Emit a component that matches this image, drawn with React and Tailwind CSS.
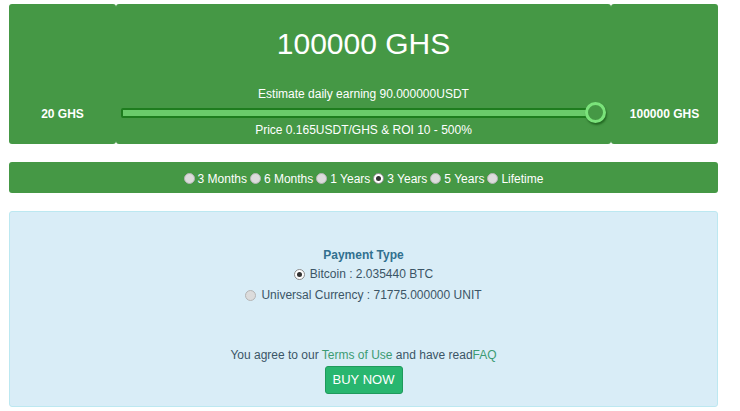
import React, { useState } from 'react';

const periods = ['3 Months', '6 Months', '1 Years', '3 Years', '5 Years', 'Lifetime'];

const Dot = ({ checked }) => (
  <span
    className={
      checked
        ? 'inline-flex h-[11px] w-[11px] items-center justify-center rounded-full border border-[#8a8a8a] bg-white'
        : 'inline-block h-[11px] w-[11px] rounded-full border border-[#b5b5b5] bg-[#dcdcdc]'
    }
  >
    {checked ? <span className="h-[5px] w-[5px] rounded-full bg-[#333]" /> : null}
  </span>
);

const App = () => {
  const [period, setPeriod] = useState('3 Years');
  const [payment, setPayment] = useState('btc');

  return (
    <div className="h-[411px] w-[740px] bg-white px-[9px] pt-[4px] font-['Liberation_Sans',Arial,sans-serif]">
      {/* hashrate selector */}
      <div className="flex h-[140px] w-[709px] text-white">
        <div className="flex w-[107px] items-end justify-center rounded-[3px] bg-[#459845] pb-[21px] text-[12px] font-bold">
          20 GHS
        </div>
        <div className="flex flex-1 flex-col items-center rounded-[3px] bg-[#459845] px-[5px]">
          <div className="mt-[23px] text-[30px] leading-[34px]">100000 GHS</div>
          <div className="mt-[26px] text-[12px] leading-[14px]">Estimate daily earning 90.000000USDT</div>
          <div className="relative mt-[5px] h-[12px] w-full">
            <div className="absolute left-0 right-[6px] top-[2px] h-[10px] rounded-[2px] border-2 border-[#1e7d1e] bg-[#6acb6a]" />
            <div className="absolute right-[0px] top-[-4px] h-[21px] w-[21px] rounded-full border-[3px] border-[#7be37b] bg-[#459845] shadow-[1px_2px_2px_rgba(0,60,0,0.5)]" />
          </div>
          <div className="mt-[5px] text-[12px] leading-[14px]">Price 0.165USDT/GHS &amp; ROI 10 - 500%</div>
        </div>
        <div className="flex w-[107px] items-end justify-center rounded-[3px] bg-[#459845] pb-[21px] text-[12px] font-bold">
          100000 GHS
        </div>
      </div>

      {/* period selector */}
      <div className="mt-[18px] flex h-[31px] w-[709px] items-center justify-center gap-[3px] rounded-[3px] bg-[#459845] pt-[2px] text-[12px] text-white">
        {periods.map((p) => (
          <label key={p} className="flex cursor-pointer items-center gap-[3px]" onClick={() => setPeriod(p)}>
            <Dot checked={period === p} />
            <span>{p}</span>
          </label>
        ))}
      </div>

      {/* payment */}
      <div className="mt-[18px] flex h-[196px] w-[709px] flex-col items-center rounded-[3px] border border-[#bce8f1] bg-[#d9edf7] text-[12px] text-[#31708f]">
        <div className="mt-[35px] font-bold leading-[16px]">Payment Type</div>
        <label className="mt-[3px] flex cursor-pointer items-center gap-[5px] leading-[16px] text-[#3b5566]" onClick={() => setPayment('btc')}>
          <Dot checked={payment === 'btc'} />
          <span>Bitcoin : 2.035440 BTC</span>
        </label>
        <label className="mt-[5px] flex cursor-pointer items-center gap-[5px] leading-[16px] text-[#3b5566]" onClick={() => setPayment('unit')}>
          <Dot checked={payment === 'unit'} />
          <span>Universal Currency : 71775.000000 UNIT</span>
        </label>
        <div className="mt-[44px] leading-[16px] text-[#3b5566]">
          You agree to our <a className="text-[#3c9b73]">Terms of Use</a> and have read<a className="text-[#3c9b73]">FAQ</a>
        </div>
        <button
          type="button"
          className="mt-[3px] h-[28px] w-[78px] rounded-[3px] border border-[#1f9a5c] bg-[#28b66f] text-[13px] text-white"
        >
          BUY NOW
        </button>
      </div>
    </div>
  );
};

export default App;
